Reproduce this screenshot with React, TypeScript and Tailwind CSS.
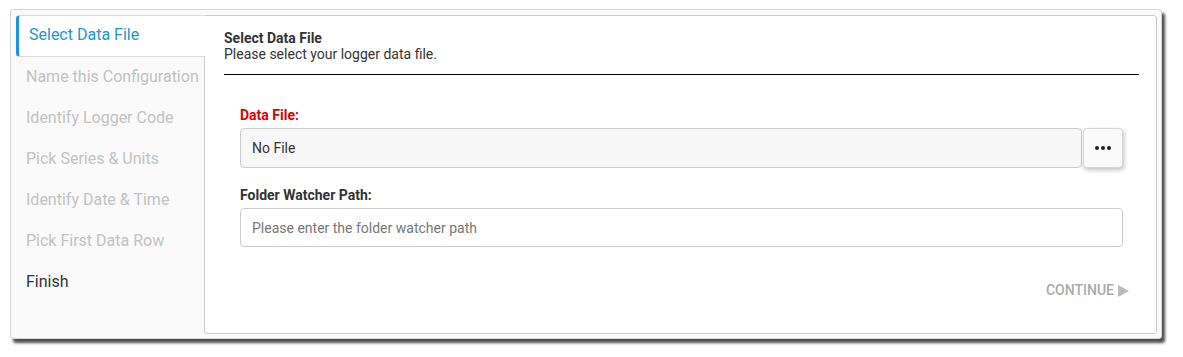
import { useState } from "react";

const steps = [
	"Select Data File",
	"Name this Configuration",
	"Identify Logger Code",
	"Pick Series & Units",
	"Identify Date & Time",
	"Pick First Data Row",
	"Finish",
];

export default function App() {
	const [active] = useState(0);
	const [path, setPath] = useState("");

	return (
		<div
			className="h-[357px] w-[1183px] bg-white pl-[10px] pt-[9px]"
			style={{ fontFamily: "Roboto, 'Liberation Sans', sans-serif" }}
		>
			<div className="flex h-[330px] w-[1152px] rounded-[3px] border border-[#d6d6d6] bg-[#fafafa] pb-[4px] pl-[5px] pr-[4px] pt-[5px] shadow-[3px_4px_3px_rgba(0,0,0,0.7)]">
				{/* steps */}
				<div className="flex w-[188px] flex-col">
					{steps.map((s, i) => {
						if (i === active) {
							return (
								<div
									key={s}
									className="relative z-10 -mr-px flex h-[42px] items-center rounded-l-[4px] border-y border-l-[3px] border-y-[#d9d9d9] border-l-[#1a95d6] bg-white pb-[2px] pl-[10px] text-[16px] text-[#1a95d6]"
								>
									{s}
								</div>
							);
						}
						return (
							<div
								key={s}
								className={
									"flex h-[41px] items-center pb-[2px] pl-[10px] text-[16px] " +
									(s === "Finish" ? "text-[#333333]" : "text-[#c2c2c2]")
								}
							>
								{s}
							</div>
						);
					})}
				</div>

				{/* panel */}
				<div className="flex flex-1 flex-col rounded-r-[3px] rounded-bl-[3px] border border-[#cccccc] bg-white pl-[19px] pr-[17px] pt-[14px]">
					<div className="border-b border-black pb-[12px] text-[14px] leading-[16px] text-[#333333]">
						<div className="font-bold">Select Data File</div>
						<div>Please select your logger data file.</div>
					</div>

					<div className="px-[16px] pt-[32px]">
						<label className="block text-[14px] font-bold leading-[16px] text-[#dd0000]">
							Data File:
						</label>
						<div className="mt-[5px] flex">
							<div className="flex h-[40px] flex-1 items-center rounded-[4px] border border-[#cccccc] bg-[#f7f7f7] pl-[11px] text-[14px] text-[#333333]">
								No File
							</div>
							<button className="ml-px flex h-[40px] w-[40px] items-center justify-center gap-[2px] rounded-[4px] border border-[#d6d6d6] bg-[#fafafa] shadow-[1px_2px_4px_rgba(0,0,0,0.25)]">
								<span className="h-[4px] w-[4px] rounded-full bg-[#222]" />
								<span className="h-[4px] w-[4px] rounded-full bg-[#222]" />
								<span className="h-[4px] w-[4px] rounded-full bg-[#222]" />
							</button>
						</div>

						<label className="mt-[19px] block text-[14px] font-bold leading-[16px] text-[#333333]">
							Folder Watcher Path:
						</label>
						<input
							value={path}
							onChange={(e) => setPath(e.target.value)}
							placeholder="Please enter the folder watcher path"
							className="mt-[5px] block h-[39px] w-full rounded-[4px] border border-[#cccccc] bg-white pl-[11px] text-[14px] text-[#333333] outline-none placeholder:text-[#777777]"
						/>

						<div className="mt-[35px] flex justify-end">
							<button className="mr-[-6px] flex items-center gap-[4px] text-[14px] font-medium uppercase leading-[17px] text-[#aaaaaa]">
								Continue
								<svg width="11" height="12" viewBox="0 0 11 12" className="fill-[#bbbbbb]">
									<path d="M0 0 L11 6 L0 12 Z" />
								</svg>
							</button>
						</div>
					</div>
				</div>
			</div>
		</div>
	);
}
